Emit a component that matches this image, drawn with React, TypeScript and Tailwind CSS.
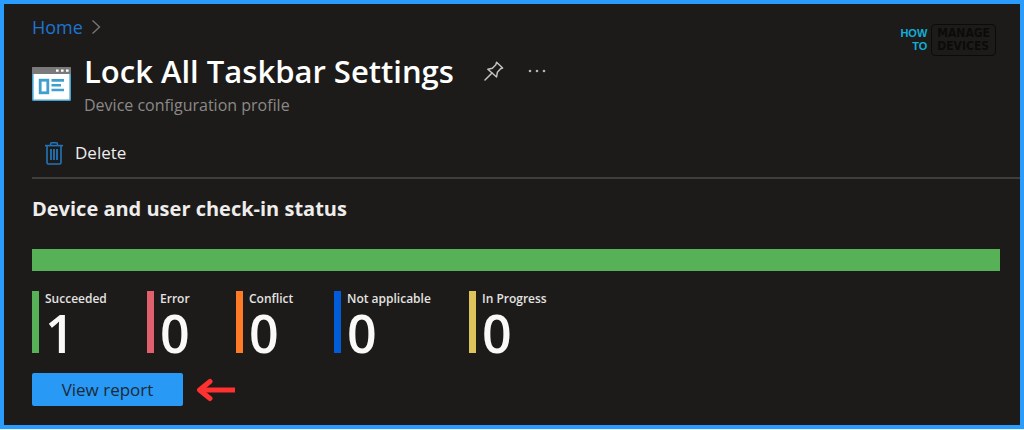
import React from 'react';

const statuses = [
  { label: 'Succeeded', count: 1, color: 'bg-[#57b257]' },
  { label: 'Error', count: 0, color: 'bg-[#e0606e]' },
  { label: 'Conflict', count: 0, color: 'bg-[#ff7a26]' },
  { label: 'Not applicable', count: 0, color: 'bg-[#015cda]' },
  { label: 'In Progress', count: 0, color: 'bg-[#dec25a]' },
];

const ProfileIcon = () => (
  <svg viewBox="0 0 39 34" className="w-[39px] h-[34px] shrink-0" aria-hidden="true">
    <rect x="0.8" y="0.8" width="37.4" height="32.4" rx="0.8" fill="#fff" stroke="#45a3d1" strokeWidth="1.6" />
    <path d="M0 1a1 1 0 0 1 1-1h37a1 1 0 0 1 1 1v6H0z" fill="#7a7a7a" />
    <path d="M24 2.4h2.6v2.4H24zM29 2.4h2.6v2.4H29zM34 2.4h2.6v2.4H34z" fill="#fff" />
    <rect x="8.2" y="13.2" width="7.6" height="12.6" fill="#fff" stroke="#3f9fcf" strokeWidth="2.8" />
    <path d="M19.5 13.4h12.5M19.5 18.2h9.5M19.5 23h12.5" stroke="#3f9fcf" strokeWidth="2.6" />
  </svg>
);

const PinIcon = () => (
  <svg viewBox="0 0 20 20" className="size-5" fill="none" stroke="#c2c1c0" strokeWidth="1.5" strokeLinejoin="round" aria-hidden="true">
    <path d="M12.6 1.2 18.6 7l-2 .8-3.2 3.4-.8 4.8L3.8 8.2l4.6-.9 3.4-3.6z" />
    <path d="M8 12 1 19" strokeLinecap="round" />
  </svg>
);

const TrashIcon = () => (
  <svg viewBox="0 0 18 23" className="w-[18px] h-[23px]" fill="none" stroke="#2374b8" aria-hidden="true">
    <path d="M0 3.6h18" strokeWidth="1.6" />
    <path d="M5.6 3.4V1.8q0-1 1-1h4.8q1 0 1 1v1.6" strokeWidth="1.5" />
    <path d="M2 3.8V20.6q0 1.4 1.4 1.4h11.2q1.4 0 1.4-1.4V3.8" strokeWidth="1.6" />
    <path d="M6 7v11M9 7v11M12 7v11" strokeWidth="1.8" />
  </svg>
);

const Logo = () => (
  <div className="flex items-center gap-1">
    <div className="text-right text-[11px] leading-[13px] font-bold text-[#12aed8] font-['Liberation_Sans',sans-serif]">
      <div>HOW</div>
      <div>TO</div>
    </div>
    <div className="rounded-sm border border-[#0b0b0a] px-[5px] py-0.5 text-[12px] leading-[13px] font-bold text-[#0b0b0a] font-['DejaVu_Sans_Condensed','DejaVu_Sans',sans-serif]">
      <div>MANAGE</div>
      <div>DEVICES</div>
    </div>
  </div>
);

const App = () => {
  return (
    <div className="bg-[#e4f2ff] pb-px font-['Open_Sans','Noto_Sans',sans-serif]">
      <main className="border-4 border-[#2a9dfc] bg-[#1c1b19] pl-7 pb-[19px]">
        {/* 顶部导航 */}
        <header className="flex items-start justify-between pr-6">
          <div>
            <nav aria-label="Breadcrumb" className="flex items-center gap-2 pt-[11px]">
              <a href="#" className="text-[18px] leading-6 text-[#1c74d4]">Home</a>
              <svg viewBox="0 0 10 16" className="w-[10px] h-4" fill="none" stroke="#767573" strokeWidth="1.4" aria-hidden="true">
                <path d="m1.5 1.5 7 6.5-7 6.5" />
              </svg>
            </nav>
            <div className="flex items-start gap-[13px] pt-2">
              <div className="pt-5">
                <ProfileIcon />
              </div>
              <div>
                <div className="flex items-center">
                  <h1 className="text-[31px] leading-12 font-semibold text-white">Lock All Taskbar Settings</h1>
                  <button type="button" aria-label="Pin" className="ml-[30px]">
                    <PinIcon />
                  </button>
                  <button type="button" aria-label="More" className="ml-6">
                    <svg viewBox="0 0 18 6" className="w-[18px] h-[6px]" fill="#b5b4b3" aria-hidden="true">
                      <circle cx="2" cy="3" r="1.3" />
                      <circle cx="9" cy="3" r="1.3" />
                      <circle cx="16" cy="3" r="1.3" />
                    </svg>
                  </button>
                </div>
                <p className="text-[16px] leading-5 text-[#8b8987]">Device configuration profile</p>
              </div>
            </div>
          </div>
          <div className="pt-5">
            <Logo />
          </div>
        </header>

        {/* 工具栏 */}
        <div className="mt-4 border-b-2 border-[#3f3e3d] pt-2 pb-[10px] pl-[13px]">
          <button type="button" className="flex items-center gap-3 text-[17px] leading-7 text-[#eeedec]">
            <TrashIcon />
            Delete
          </button>
        </div>

        <section className="pr-5">
          <h2 className="pt-4 text-[20px] leading-7 font-bold text-[#eeedec]">Device and user check-in status</h2>
          <div className="mt-[26px] h-[22px] bg-[#57b257]" />

          {/* 状态统计 */}
          <div className="mt-5 grid grid-cols-[115px_89px_98px_135px_1fr]">
            {statuses.map((item) => (
              <div key={item.label} className="flex gap-1.5">
                <div className={`w-[7px] h-[62px] ${item.color}`} />
                <div>
                  <div className="text-[12px] leading-4 font-semibold text-[#e4e3e2] whitespace-nowrap">{item.label}</div>
                  <div className="text-[52px] leading-[52px] font-semibold text-[#faf9f8]">{item.count}</div>
                </div>
              </div>
            ))}
          </div>

          <div className="mt-[14px] flex items-center gap-3">
            <button type="button" className="w-[151px] rounded-xs bg-[#2899f5] text-[17px] leading-[33px] font-medium text-[#1b2a38]">
              View report
            </button>
            <svg viewBox="0 0 40 24" className="w-10 h-6" fill="none" stroke="#ff3131" strokeWidth="5" aria-hidden="true">
              <path d="M40 12H5" />
              <path d="M15 3.500 4.500 12 15 20.500" strokeLinecap="round" strokeLinejoin="round" />
            </svg>
          </div>
        </section>
      </main>
    </div>
  );
};

export default App;
